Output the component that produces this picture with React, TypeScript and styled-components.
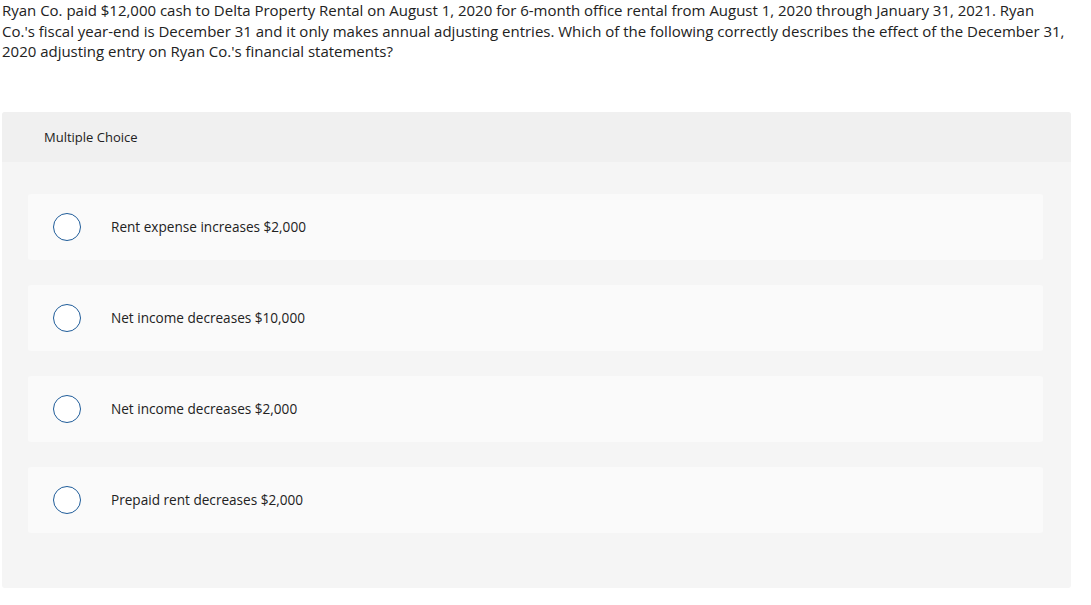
import styled, { createGlobalStyle } from 'styled-components';

const options = [
  'Rent expense increases $2,000',
  'Net income decreases $10,000',
  'Net income decreases $2,000',
  'Prepaid rent decreases $2,000',
];

const GlobalStyle = createGlobalStyle`
  body {
    margin: 0;
    background: #fff;
    font-family: 'Open Sans', 'Liberation Sans', sans-serif;
    color: #212121;
  }
`;

function App() {
  return (
    <Page>
      <GlobalStyle />
      <Question>
        Ryan Co. paid $12,000 cash to Delta Property Rental on August 1, 2020 for 6-month office rental from August 1, 2020 through January 31, 2021. Ryan
        <br />
        Co.'s fiscal year-end is December 31 and it only makes annual adjusting entries. Which of the following correctly describes the effect of the December 31,
        <br />
        2020 adjusting entry on Ryan Co.'s financial statements?
      </Question>
      <Panel>
        <PanelHeader>Multiple Choice</PanelHeader>
        <Choices>
          {options.map((label) => (
            <Choice key={label}>
              <Radio />
              <ChoiceLabel>{label}</ChoiceLabel>
            </Choice>
          ))}
        </Choices>
      </Panel>
    </Page>
  );
}

const Page = styled.div`
  width: 1091px;
`;

const Question = styled.p`
  margin: 0;
  padding: 0 2px;
  font-size: 15px;
  letter-spacing: -0.01px;
  line-height: 20.5px;
  white-space: nowrap;
  color: #222;
`;

const Panel = styled.div`
  margin: 50.5px 20px 0 2px;
  background: #f5f5f5;
  border-radius: 3px;
  overflow: hidden;
`;

const PanelHeader = styled.div`
  height: 50px;
  display: flex;
  align-items: center;
  padding-left: 42px;
  background: #f0f0f0;
  font-size: 13px;
  color: #222;
`;

const Choices = styled.div`
  display: flex;
  flex-direction: column;
  gap: 25px;
  padding: 32px 28px 55px 26px;
`;

const Choice = styled.div`
  height: 66px;
  display: flex;
  align-items: center;
  padding-left: 25px;
  background: #fafafa;
  border-radius: 3px;
`;

const Radio = styled.span`
  box-sizing: border-box;
  width: 28px;
  height: 28px;
  border-radius: 50%;
  border: 1.5px solid #1f5c99;
  background: #fff;
  flex-shrink: 0;
`;

const ChoiceLabel = styled.span`
  margin-left: 30px;
  margin-bottom: 2px;
  font-size: 13.6px;
  color: #222;
`;

export default App;
